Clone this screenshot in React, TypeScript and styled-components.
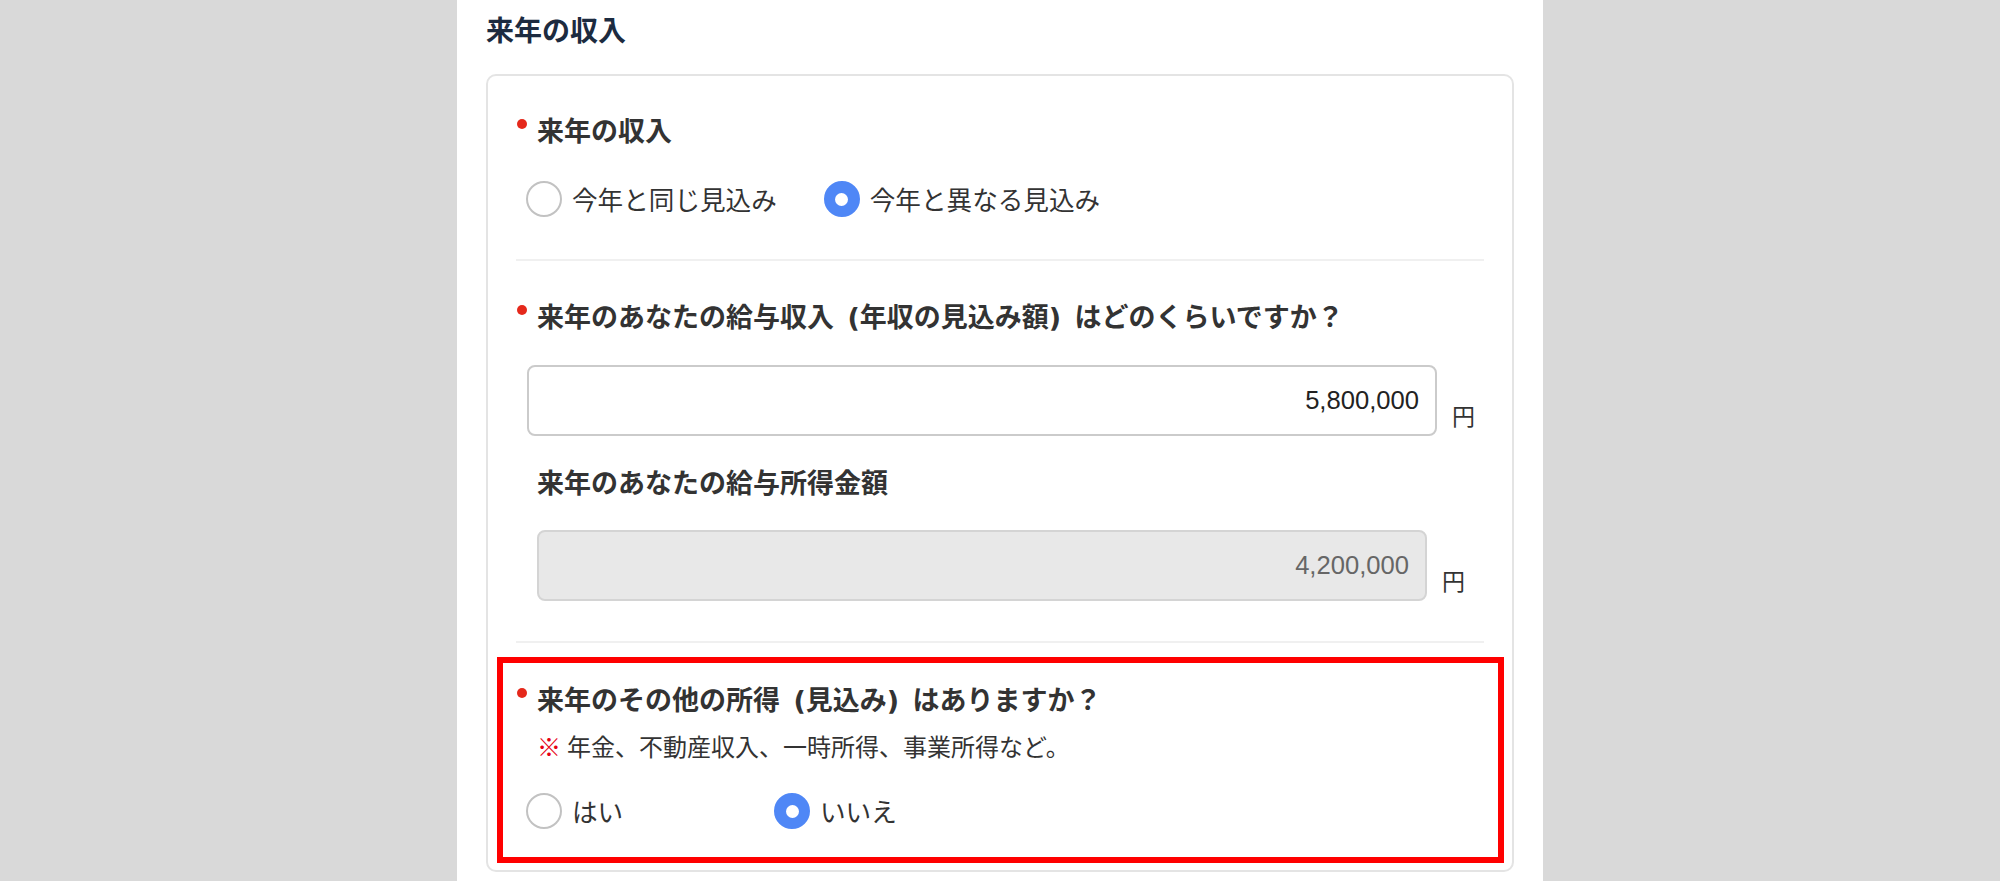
import React, { useState } from 'react';
import styled, { createGlobalStyle } from 'styled-components';

/// Global
const GlobalStyle = createGlobalStyle`
  html, body {
    margin: 0;
    padding: 0;
    background: #d9d9d9;
  }
  body {
    font-family: "Noto Sans CJK JP", "Noto Sans", sans-serif;
    color: #333;
  }
`;

/// Layout
const Page = styled.div`
  width: 1086px;
  min-height: 100vh;
  margin: 0 auto;
  box-sizing: border-box;
  padding: 9px 29px;
  background: #fff;
`;

const Heading = styled.h2`
  margin: 0 0 25px;
  font-size: 28px;
  line-height: 40px;
  font-weight: 700;
  color: #1c2b40;
`;

const Card = styled.div`
  border: 2px solid #e4e4e4;
  border-radius: 10px;
  padding: 0 28px 7px;
`;

const Section = styled.section<{ $top: number; $bottom: number }>`
  padding: ${ p => p.$top }px 0 ${ p => p.$bottom }px;
  border-bottom: 2px solid #f0f0f0;
`;

// red annotation frame around the last question
const Highlight = styled.section`
  margin: 14px -20px 0 -19px;
  border: 6px solid #ff0000;
  padding: 18px 14px 28px 13px;
`;

const SubBlock = styled.div`
  padding: 0 10px;
`;

/// Labels
const FieldLabel = styled.div<{ $top?: number }>`
  display: flex;
  align-items: flex-start;
  margin-top: ${ p => p.$top || 0 }px;
  font-family: "DejaVu Sans", "Noto Sans CJK JP", sans-serif;
  font-size: 27px;
  line-height: 40px;
  font-weight: 700;
  word-spacing: 4px;
  color: #333;
`;

const RequiredDot = styled.span`
  flex: none;
  width: 10px;
  height: 10px;
  border-radius: 50%;
  background: #e5281b;
  margin: 7px 10px 0 1px;
`;

const PlainLabel = styled(FieldLabel)`
  padding-left: 11px;
`;

const Note = styled.p`
  margin: 8px 0 0 21px;
  font-size: 24px;
  line-height: 34px;
  color: #333;
`;

const Mark = styled.span`
  color: #e60012;
  margin-right: 6px;
`;

/// Amount inputs
const InputRow = styled.div<{ $top: number }>`
  display: flex;
  align-items: flex-end;
  margin: ${ p => p.$top }px 9px 0 11px;
`;

const AmountInput = styled.input<{ $locked?: boolean }>`
  flex: 1;
  min-width: 0;
  height: 71px;
  box-sizing: border-box;
  border: 2px solid ${ p => p.$locked ? '#d4d4d4' : '#cbcbcb' };
  border-radius: 8px;
  background: ${ p => p.$locked ? '#e8e8e8' : '#fff' };
  padding: 0 16px;
  text-align: right;
  font-family: "Liberation Sans", Arial, sans-serif;
  font-size: 25.6px;
  color: ${ p => p.$locked ? '#666' : '#222' };
  outline: none;
`;

const Yen = styled.span`
  flex: none;
  margin: 0 0 6px 15px;
  font-size: 23px;
  line-height: 30px;
  color: #333;
`;

/// Radios
const RadioGroup = styled.div<{ $top: number }>`
  display: flex;
  margin: ${ p => p.$top }px 0 0 10px;
`;

const Option = styled.div`
  display: flex;
  align-items: center;
  gap: 10px;
  min-width: 201px;
  margin-right: 47px;
  font-size: 25.6px;
  line-height: 36px;
  color: #333;
  cursor: pointer;
`;

const RadioCircle = styled.span<{ $checked: boolean }>`
  flex: none;
  box-sizing: border-box;
  width: 36px;
  height: 36px;
  border-radius: 50%;
  border: 2px solid ${ p => p.$checked ? '#4f87f6' : '#c2c2c2' };
  background: ${ p => p.$checked ? '#4f87f6' : '#fff' };
  display: flex;
  align-items: center;
  justify-content: center;

  &::after {
    content: '';
    display: ${ p => p.$checked ? 'block' : 'none' };
    width: 13px;
    height: 13px;
    border-radius: 50%;
    background: #fff;
  }
`;

interface RadioSetProps {
  options: string[];
  value: string;
  onChange: (v: string) => void;
  top: number;
}

const RadioSet = ({ options, value, onChange, top }: RadioSetProps) => {
  return <RadioGroup $top={ top } role={ 'radiogroup' }>
    { options.map(o => (
      <Option key={ o } role={ 'radio' } aria-checked={ o === value } onClick={ () => onChange(o) }>
        <RadioCircle $checked={ o === value }/>
        { o }
      </Option>
    )) }
  </RadioGroup>;
};

/// App
export default function App() {
  const [outlook, setOutlook] = useState('今年と異なる見込み');
  const [otherIncome, setOtherIncome] = useState('いいえ');

  return (
    <>
      <GlobalStyle/>
      <Page>
        <Heading>来年の収入</Heading>
        <Card>
          <Section $top={ 36 } $bottom={ 42 }>
            <FieldLabel><RequiredDot/>来年の収入</FieldLabel>
            <RadioSet top={ 29 } options={ ['今年と同じ見込み', '今年と異なる見込み'] }
                      value={ outlook } onChange={ setOutlook }/>
          </Section>

          <Section $top={ 37 } $bottom={ 40 }>
            <FieldLabel><RequiredDot/>来年のあなたの給与収入 (年収の見込み額) はどのくらいですか？</FieldLabel>
            <InputRow $top={ 27 }>
              <AmountInput defaultValue={ '5,800,000' }/>
              <Yen>円</Yen>
            </InputRow>
            <SubBlock>
              <PlainLabel $top={ 28 }>来年のあなたの給与所得金額</PlainLabel>
              <InputRow $top={ 26 }>
                <AmountInput $locked readOnly value={ '4,200,000' }/>
                <Yen>円</Yen>
              </InputRow>
            </SubBlock>
          </Section>

          <Highlight>
            <FieldLabel><RequiredDot/>来年のその他の所得 (見込み) はありますか？</FieldLabel>
            <Note><Mark>※</Mark>年金、不動産収入、一時所得、事業所得など。</Note>
            <RadioSet top={ 30 } options={ ['はい', 'いいえ'] }
                      value={ otherIncome } onChange={ setOtherIncome }/>
          </Highlight>
        </Card>
      </Page>
    </>
  );
}
